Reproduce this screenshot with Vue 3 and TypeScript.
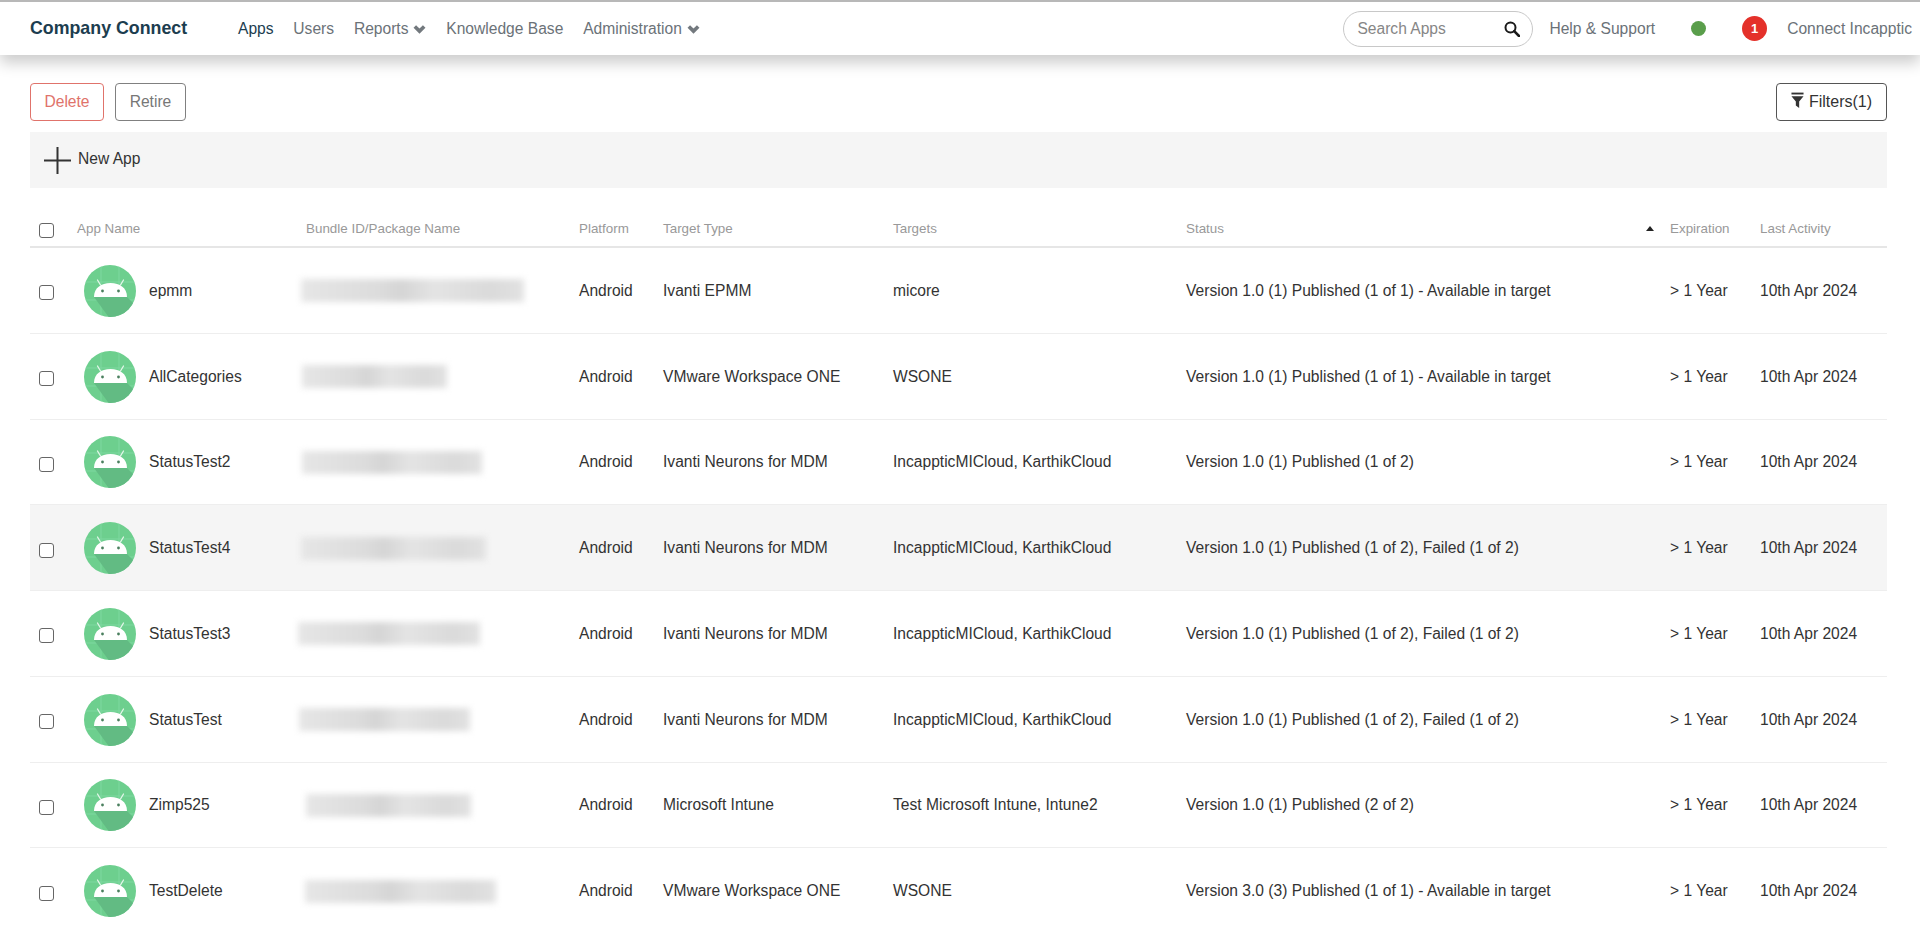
<script setup lang="ts">
type AppRow = {
  name: string
  blurLeft: number
  blurWidth: number
  targetType: string
  targets: string
  status: string
  hovered?: boolean
}

const navItems = [
  { label: 'Apps', active: true },
  { label: 'Users' },
  { label: 'Reports', caret: true },
  { label: 'Knowledge Base' },
  { label: 'Administration', caret: true },
]

const rows: AppRow[] = [
  { name: 'epmm', blurLeft: -5, blurWidth: 223, targetType: 'Ivanti EPMM', targets: 'micore', status: 'Version 1.0 (1) Published (1 of 1) - Available in target' },
  { name: 'AllCategories', blurLeft: -4, blurWidth: 145, targetType: 'VMware Workspace ONE', targets: 'WSONE', status: 'Version 1.0 (1) Published (1 of 1) - Available in target' },
  { name: 'StatusTest2', blurLeft: -4, blurWidth: 180, targetType: 'Ivanti Neurons for MDM', targets: 'IncappticMICloud, KarthikCloud', status: 'Version 1.0 (1) Published (1 of 2)' },
  { name: 'StatusTest4', blurLeft: -5, blurWidth: 185, targetType: 'Ivanti Neurons for MDM', targets: 'IncappticMICloud, KarthikCloud', status: 'Version 1.0 (1) Published (1 of 2), Failed (1 of 2)', hovered: true },
  { name: 'StatusTest3', blurLeft: -8, blurWidth: 182, targetType: 'Ivanti Neurons for MDM', targets: 'IncappticMICloud, KarthikCloud', status: 'Version 1.0 (1) Published (1 of 2), Failed (1 of 2)' },
  { name: 'StatusTest', blurLeft: -7, blurWidth: 171, targetType: 'Ivanti Neurons for MDM', targets: 'IncappticMICloud, KarthikCloud', status: 'Version 1.0 (1) Published (1 of 2), Failed (1 of 2)' },
  { name: 'Zimp525', blurLeft: 0, blurWidth: 165, targetType: 'Microsoft Intune', targets: 'Test Microsoft Intune, Intune2', status: 'Version 1.0 (1) Published (2 of 2)' },
  { name: 'TestDelete', blurLeft: -1, blurWidth: 191, targetType: 'VMware Workspace ONE', targets: 'WSONE', status: 'Version 3.0 (3) Published (1 of 1) - Available in target' },
]
</script>

<template>
  <div class="page">
    <header class="topbar">
      <div class="brand">Company Connect</div>
      <nav class="nav">
        <a v-for="item in navItems" :key="item.label" class="nav-item" :class="{ active: item.active }">
          {{ item.label }}
          <svg v-if="item.caret" class="caret" viewBox="0 0 13 10" width="13" height="10">
            <path d="M1.8 2.4 L6.5 7.1 L11.2 2.4" fill="none" stroke="#73797e" stroke-width="3.6" />
          </svg>
        </a>
      </nav>
      <div class="top-right">
        <div class="search">
          <input class="search-input" placeholder="Search Apps" />
          <svg class="search-icon" viewBox="0 0 16 16" width="16" height="16">
            <circle cx="6.5" cy="6.5" r="5" fill="none" stroke="#1a1a1a" stroke-width="2" />
            <path d="M10.2 10.2 L15 15" stroke="#1a1a1a" stroke-width="2.6" stroke-linecap="round" />
          </svg>
        </div>
        <a class="help">Help &amp; Support</a>
        <span class="dot"></span>
        <span class="badge">1</span>
        <a class="account">Connect Incapptic</a>
      </div>
    </header>

    <main class="content">
      <div class="actions">
        <button class="btn delete">Delete</button>
        <button class="btn retire">Retire</button>
        <button class="btn filters">
          <svg class="funnel" viewBox="0 0 14 18" width="13" height="17">
            <rect x="0.5" y="0.5" width="13" height="2" fill="#333" />
            <path d="M0.5 4.5 H13.5 L8.8 10 V17 L5.2 14.5 V10 Z" fill="#333" />
          </svg>
          Filters(1)
        </button>
      </div>

      <div class="new-bar">
        <svg viewBox="0 0 27 27" width="27" height="27">
          <path d="M13.5 0 V27 M0 13.5 H27" stroke="#333" stroke-width="2" />
        </svg>
        <span>New App</span>
      </div>

      <div class="table-row table-head">
        <div class="cell-check"><input type="checkbox" class="check" /></div>
        <div>App Name</div>
        <div>Bundle ID/Package Name</div>
        <div>Platform</div>
        <div>Target Type</div>
        <div>Targets</div>
        <div class="status-head">Status<span class="sort-arrow"></span></div>
        <div>Expiration</div>
        <div>Last Activity</div>
      </div>

      <div v-for="row in rows" :key="row.name" class="table-row body-row" :class="{ hovered: row.hovered }">
        <div class="cell-check"><input type="checkbox" class="check" /></div>
        <div class="app-cell">
          <svg class="app-icon" viewBox="0 0 52 52" width="52" height="52">
            <defs>
              <clipPath :id="`clip-${row.name}`"><circle cx="26" cy="26" r="26" /></clipPath>
            </defs>
            <circle cx="26" cy="26" r="26" fill="#6dcf8e" />
            <g :clip-path="`url(#clip-${row.name})`">
              <path d="M0 17 H52 M0 35 H52 M17 0 V52 M35 0 V52" stroke="#7fd8a0" stroke-width="1" />
              <path d="M10 32 L43 32 L58 47 L32 62 Z" fill="#62bb83" />
            </g>
            <path d="M10 32 C10 23 17 18 26.5 18 C36 18 43 23 43 32 Z" fill="#fff" />
            <path d="M16.5 20 L13.5 15 M36.5 20 L39.5 15" stroke="#e4f6ea" stroke-width="1.3" stroke-linecap="round" />
            <circle cx="18.5" cy="26" r="1.4" fill="#4a7f5e" />
            <circle cx="34.5" cy="26" r="1.4" fill="#4a7f5e" />
          </svg>
          <span class="app-name">{{ row.name }}</span>
        </div>
        <div>
          <div
            class="blurred"
            :style="{ marginLeft: row.blurLeft + 'px', width: row.blurWidth + 'px' }"
          ></div>
        </div>
        <div>Android</div>
        <div>{{ row.targetType }}</div>
        <div>{{ row.targets }}</div>
        <div>{{ row.status }}</div>
        <div>&gt; 1 Year</div>
        <div>10th Apr 2024</div>
      </div>
    </main>
  </div>
</template>

<style>
html,
body {
  margin: 0;
  background: #fff;
  overflow: hidden;
}
</style>

<style scoped>
.page {
  height: 933px;
  overflow: hidden;
  font-family: 'Liberation Sans', Arial, sans-serif;
  color: #333;
}

.topbar {
  position: relative;
  height: 53px;
  border-top: 2px solid #b8b8b8;
  display: flex;
  align-items: center;
  padding: 0 8px 0 30px;
  background: #fff;
  box-shadow: 0 8px 14px rgba(0, 0, 0, 0.2);
}

.brand {
  width: 208px;
  font-size: 17.8px;
  font-weight: 700;
  color: #1c3d4f;
}

.nav {
  display: flex;
  gap: 19.8px;
  font-size: 15.6px;
}

.nav-item {
  color: #6b7278;
  display: flex;
  align-items: center;
  gap: 5px;
}

.nav-item.active {
  color: #1c3d4f;
}

.top-right {
  margin-left: auto;
  display: flex;
  align-items: center;
  font-size: 15.6px;
  color: #6b7278;
}

.search {
  width: 190px;
  height: 36px;
  box-sizing: border-box;
  border: 1px solid #c8c8c8;
  border-radius: 18px;
  display: flex;
  align-items: center;
  padding: 0 12px 0 13px;
}

.search-input {
  flex: 1;
  min-width: 0;
  border: none;
  outline: none;
  padding: 0;
  font: inherit;
  background: transparent;
}

.search-input::placeholder {
  color: #868686;
  opacity: 1;
}

.help {
  margin-left: 16px;
}

.dot {
  width: 15px;
  height: 15px;
  border-radius: 50%;
  background: #5a9e4b;
  margin-left: 36px;
}

.badge {
  width: 25px;
  height: 25px;
  border-radius: 50%;
  background: #e4312a;
  color: #fff;
  font-size: 13px;
  font-weight: 700;
  display: flex;
  align-items: center;
  justify-content: center;
  margin-left: 36px;
}

.account {
  margin-left: 20px;
}

.content {
  padding: 28px 33px 0 30px;
}

.actions {
  display: flex;
  gap: 11px;
  height: 38px;
}

.btn {
  height: 38px;
  box-sizing: border-box;
  background: #fff;
  border-radius: 4px;
  font-family: inherit;
  font-size: 15.6px;
  padding: 0;
}

.delete {
  width: 74px;
  border: 1px solid #e0736b;
  color: #e0736b;
}

.retire {
  width: 71px;
  border: 1px solid #808080;
  color: #777;
}

.filters {
  margin-left: auto;
  width: 111px;
  border: 1.5px solid #555;
  color: #333;
  font-size: 16px;
  display: flex;
  align-items: center;
  justify-content: center;
  gap: 5px;
}

.funnel {
  margin-top: -3px;
}

.new-bar {
  margin-top: 11px;
  height: 56px;
  background: #f5f5f5;
  display: flex;
  align-items: center;
  gap: 7px;
  padding-left: 14px;
  font-size: 15.6px;
}

.new-bar span {
  position: relative;
  top: -1px;
}

.table-row {
  display: grid;
  grid-template-columns: 47px 229px 273px 84px 230px 293px 484px 90px 127px;
  align-items: center;
}

.table-head {
  margin-top: 24px;
  height: 32px;
  padding-bottom: 2px;
  border-bottom: 2px solid #e6e6e6;
  font-size: 13.4px;
  color: #999;
  box-sizing: content-box;
}

.body-row {
  height: 85.75px;
  box-sizing: border-box;
  padding-top: 1px;
  border-bottom: 1px solid #eeeeee;
  font-size: 15.6px;
  color: #333;
}

.body-row.hovered {
  background: #f5f5f5;
}

.cell-check {
  padding-left: 9px;
  display: flex;
  padding-top: 4px;
}

.check {
  appearance: none;
  width: 15px;
  height: 15px;
  margin: 0;
  box-sizing: border-box;
  border: 1.5px solid #666;
  border-radius: 3px;
  background: #fff;
}

.app-cell {
  display: flex;
  align-items: center;
  gap: 13px;
  margin-left: 7px;
}

.app-icon {
  flex-shrink: 0;
}

.blurred {
  height: 23px;
  background: linear-gradient(90deg, #e6e6e6 0%, #dcdcdc 35%, #d5d5d5 45%, #e4e4e4 60%, #dadada 85%, #e2e2e2 100%);
  filter: blur(3px);
}

.status-head {
  display: flex;
  justify-content: space-between;
  align-items: center;
  padding-right: 16px;
}

.sort-arrow {
  width: 0;
  height: 0;
  border-left: 4px solid transparent;
  border-right: 4px solid transparent;
  border-bottom: 5px solid #222;
}
</style>
